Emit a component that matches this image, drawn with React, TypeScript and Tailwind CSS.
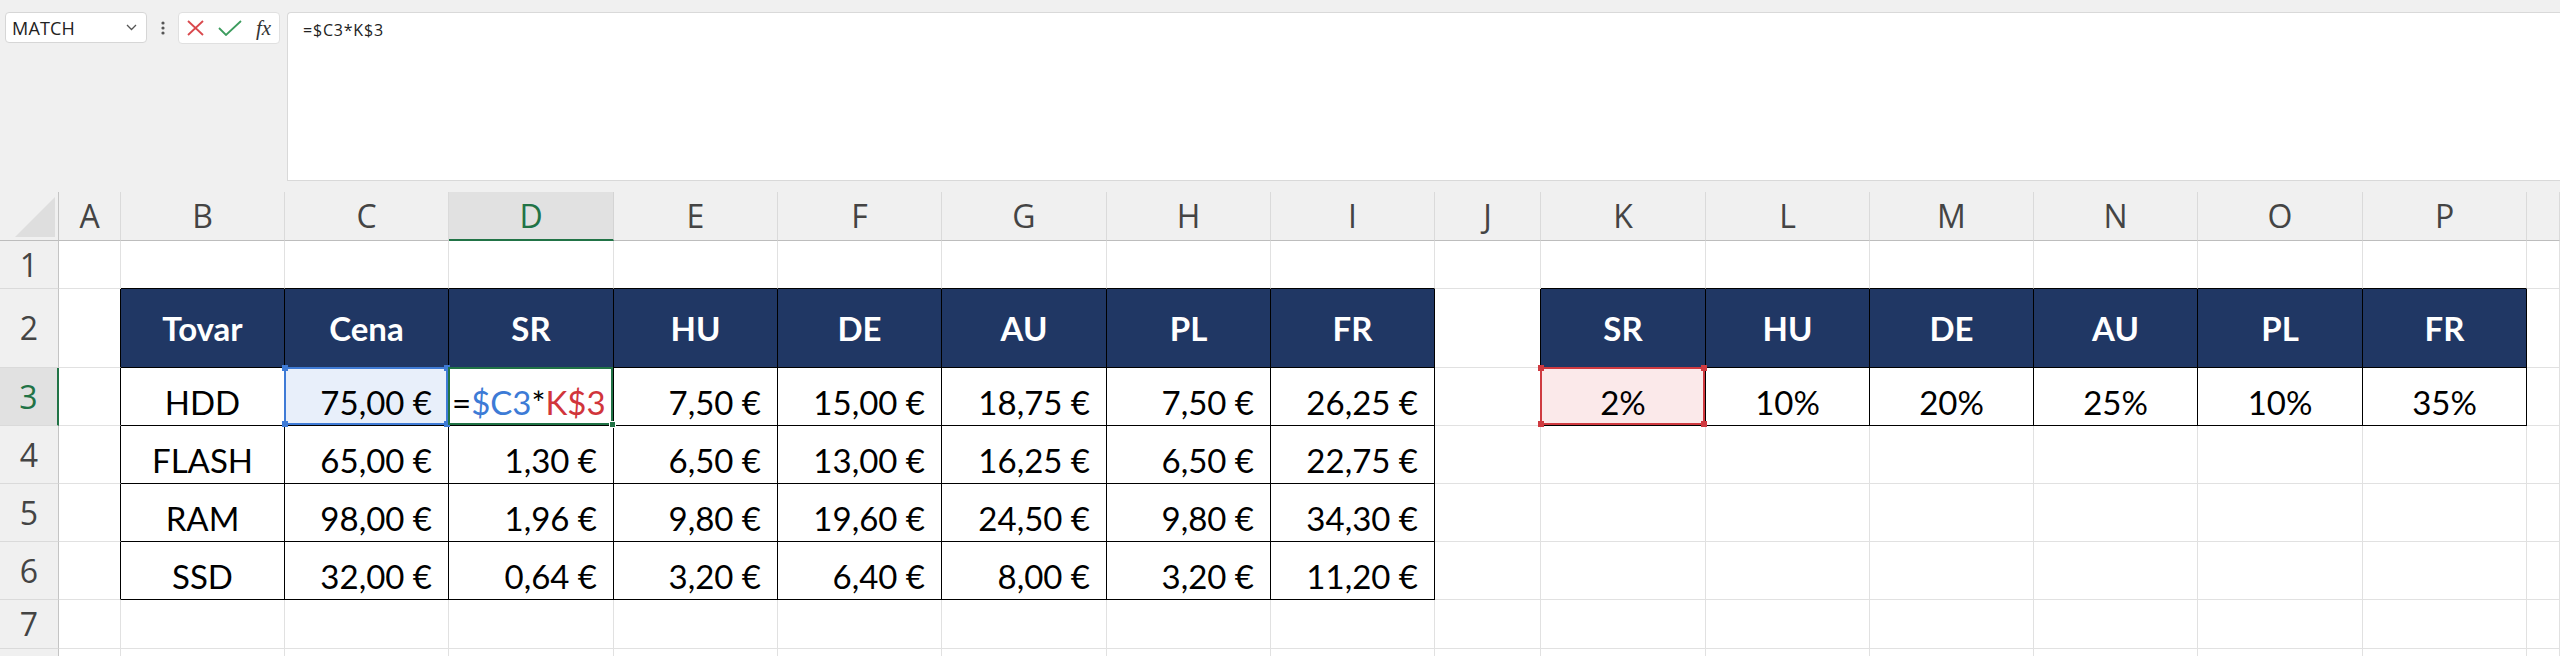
import React from "react";

const LETTERS = ["A","B","C","D","E","F","G","H","I","J","K","L","M","N","O","P","Q"];
const ROWS = [1, 2, 3, 4, 5, 6, 7, 8];

const leftHeaders = ["Tovar", "Cena", "SR", "HU", "DE", "AU", "PL", "FR"];
const rightHeaders = ["SR", "HU", "DE", "AU", "PL", "FR"];
const leftData: string[][] = [
  ["HDD", "75,00 €", "", "7,50 €", "15,00 €", "18,75 €", "7,50 €", "26,25 €"],
  ["FLASH", "65,00 €", "1,30 €", "6,50 €", "13,00 €", "16,25 €", "6,50 €", "22,75 €"],
  ["RAM", "98,00 €", "1,96 €", "9,80 €", "19,60 €", "24,50 €", "9,80 €", "34,30 €"],
  ["SSD", "32,00 €", "0,64 €", "3,20 €", "6,40 €", "8,00 €", "3,20 €", "11,20 €"],
];
const rates = ["2%", "10%", "20%", "25%", "10%", "35%"];

function inTable(r: number, c: number) {
  return (r >= 2 && r <= 6 && c >= 1 && c <= 8) || (r >= 2 && r <= 3 && c >= 10 && c <= 15);
}

const UI = { fontFamily: '"Open Sans", "Noto Sans", sans-serif' };
const CELL = { fontFamily: 'Lato, "Liberation Sans", sans-serif' };

function Corner({ pos, color }: { pos: string; color: string }) {
  return <div className={`absolute w-[6px] h-[6px] ${pos} ${color}`} />;
}

function Cell({ r, c }: { r: number; c: number }) {
  const t = inTable(r, c);
  const right = t || inTable(r, c + 1) ? "border-r-black" : "border-r-[#e1e1e1]";
  const bottom = t || inTable(r + 1, c) ? "border-b-black" : "border-b-[#e1e1e1]";
  let content: React.ReactNode = null;
  let inner = "";
  let bg = "bg-white";

  if (r === 2 && c >= 1 && c <= 8) {
    bg = "bg-[#203764]";
    inner = "items-center justify-center font-bold text-white";
    content = leftHeaders[c - 1];
  } else if (r === 2 && c >= 10 && c <= 15) {
    bg = "bg-[#203764]";
    inner = "items-center justify-center font-bold text-white";
    content = rightHeaders[c - 10];
  } else if (r >= 3 && r <= 6 && c >= 1 && c <= 8) {
    const v = leftData[r - 3][c - 1];
    if (c === 1) {
      inner = "items-end justify-center pb-[6px] text-black";
      content = v;
    } else if (r === 3 && c === 3) {
      inner = "items-end justify-start pl-[3px] pb-[6px] text-black";
      content = (
        <span>
          =<span className="text-[#3d7bd6]">$C3</span>*<span className="text-[#d1353b]">K$3</span>
        </span>
      );
    } else {
      inner = "items-end justify-end pr-[16px] pb-[6px] text-black";
      content = v;
    }
  } else if (r === 3 && c >= 10 && c <= 15) {
    inner = "items-end justify-center pb-[6px] text-black";
    content = rates[c - 10];
  }

  let overlay: React.ReactNode = null;
  if (r === 3 && c === 2) {
    bg = "bg-[#e8effa]";
    overlay = (
      <div className="absolute -left-px -top-px right-0 bottom-0 border-2 border-[#3f7bd6] z-10">
        <Corner pos="-left-[4px] -top-[4px]" color="bg-[#3f7bd6]" />
        <Corner pos="-right-[4px] -top-[4px]" color="bg-[#3f7bd6]" />
        <Corner pos="-left-[4px] -bottom-[4px]" color="bg-[#3f7bd6]" />
        <Corner pos="-right-[4px] -bottom-[4px]" color="bg-[#3f7bd6]" />
      </div>
    );
  } else if (r === 3 && c === 3) {
    overlay = (
      <div className="absolute -left-px -top-px right-0 bottom-0 border-2 border-[#217346] z-20">
        <div className="absolute -right-[5px] -bottom-[5px] w-[7px] h-[7px] bg-[#217346] border border-white" />
      </div>
    );
  } else if (r === 3 && c === 10) {
    bg = "bg-[#fbe9ea]";
    overlay = (
      <div className="absolute -left-px -top-px right-0 bottom-0 border-2 border-[#cf3a40] z-10">
        <Corner pos="-left-[4px] -top-[4px]" color="bg-[#cf3a40]" />
        <Corner pos="-right-[4px] -top-[4px]" color="bg-[#cf3a40]" />
        <Corner pos="-left-[4px] -bottom-[4px]" color="bg-[#cf3a40]" />
        <Corner pos="-right-[4px] -bottom-[4px]" color="bg-[#cf3a40]" />
      </div>
    );
  }

  return (
    <div className={`relative flex border-r border-b ${right} ${bottom} ${bg} ${inner} text-[33px] leading-none whitespace-nowrap`} style={CELL}>
      {content}
      {overlay}
    </div>
  );
}

export default function App() {
  return (
    <div className="w-[2560px] h-[656px] overflow-hidden bg-white">
      {/* Toolbar / formula bar */}
      <div className="h-[192px] bg-[#f0f0f0] flex items-start pt-[12px]" style={UI}>
        <div className="ml-[5px] w-[142px] h-[31px] bg-white border border-[#d6d6d6] rounded-[4px] flex items-center justify-between pl-[6px] pr-[9px]">
          <span className="text-[18px] text-[#222] leading-none tracking-[0.2px]">MATCH</span>
          <svg width="11" height="7" viewBox="0 0 11 7">
            <polyline points="1,1 5.5,5.5 10,1" fill="none" stroke="#555" strokeWidth="1.3" />
          </svg>
        </div>
        <div className="w-[31px] h-[31px] flex items-center justify-center">
          <svg width="4" height="14" viewBox="0 0 4 14">
            <circle cx="2" cy="2" r="1.6" fill="#555" />
            <circle cx="2" cy="7" r="1.6" fill="#555" />
            <circle cx="2" cy="12" r="1.6" fill="#555" />
          </svg>
        </div>
        <div className="w-[102px] h-[32px] bg-white border border-[#e0e0e0] rounded-[4px] flex items-center pl-[8px]">
          <svg width="17" height="16" viewBox="0 0 17 16">
            <line x1="1" y1="1" x2="16" y2="15" stroke="#d9484c" strokeWidth="1.8" />
            <line x1="16" y1="1" x2="1" y2="15" stroke="#d9484c" strokeWidth="1.8" />
          </svg>
          <svg className="ml-[14px]" width="24" height="16" viewBox="0 0 24 16">
            <polyline points="1,8 8,15 23,1" fill="none" stroke="#3d9c5e" strokeWidth="1.8" />
          </svg>
          <span className="ml-[14px] text-[21px] italic text-[#333] leading-none" style={{ fontFamily: '"Liberation Serif", serif' }}>fx</span>
        </div>
        <div className="ml-[7px] flex-1 h-[169px] bg-white border-l border-t border-b border-[#d9d9d9] rounded-tl-[4px] pl-[15px] pt-[5px]">
          <span className="text-[16px] leading-[20px] text-[#222] tracking-[0.8px]">=$C3*K$3</span>
        </div>
      </div>

      {/* Grid */}
      <div className="grid grid-cols-[59px_62px_164px_164px_165px_164px_164px_165px_164px_164px_106px_165px_164px_164px_164px_165px_164px_33px] grid-rows-[49px_48px_79px_58px_58px_58px_58px_49px_20px]">
        {/* select-all corner */}
        <div className="relative bg-[#f0f0f0] border-r border-b border-r-[#c4c4c4] border-b-[#bdbdbd]">
          <svg className="absolute left-[15px] top-[5px]" width="41" height="41" viewBox="0 0 41 41">
            <polygon points="0,40 40,40 40,0" fill="#dedede" />
          </svg>
        </div>
        {LETTERS.map((l, i) =>
          i === 3 ? (
            <div key={l} className="flex items-center justify-center bg-[#e1e1e1] border-r border-r-[#d4d4d4] border-b-2 border-b-[#217346] text-[32px] leading-none text-[#217346]" style={UI}>
              {l}
            </div>
          ) : (
            <div key={l} className="flex items-center justify-center bg-[#f0f0f0] border-r border-r-[#dadada] border-b border-b-[#bdbdbd] text-[32px] leading-none text-[#444]" style={UI}>
              {i === 16 ? null : l}
            </div>
          )
        )}
        {ROWS.map((r) => (
          <React.Fragment key={r}>
            {r === 3 ? (
              <div className="flex items-center justify-center bg-[#e1e1e1] border-r-2 border-r-[#217346] border-b border-b-[#dadada] text-[32px] leading-none text-[#217346]" style={UI}>
                {r}
              </div>
            ) : (
              <div className="flex items-center justify-center bg-[#f0f0f0] border-r border-r-[#c4c4c4] border-b border-b-[#dadada] text-[32px] leading-none text-[#444]" style={UI}>
                {r === 8 ? null : r}
              </div>
            )}
            {LETTERS.map((_, c) => (
              <Cell key={c} r={r} c={c} />
            ))}
          </React.Fragment>
        ))}
      </div>
    </div>
  );
}
